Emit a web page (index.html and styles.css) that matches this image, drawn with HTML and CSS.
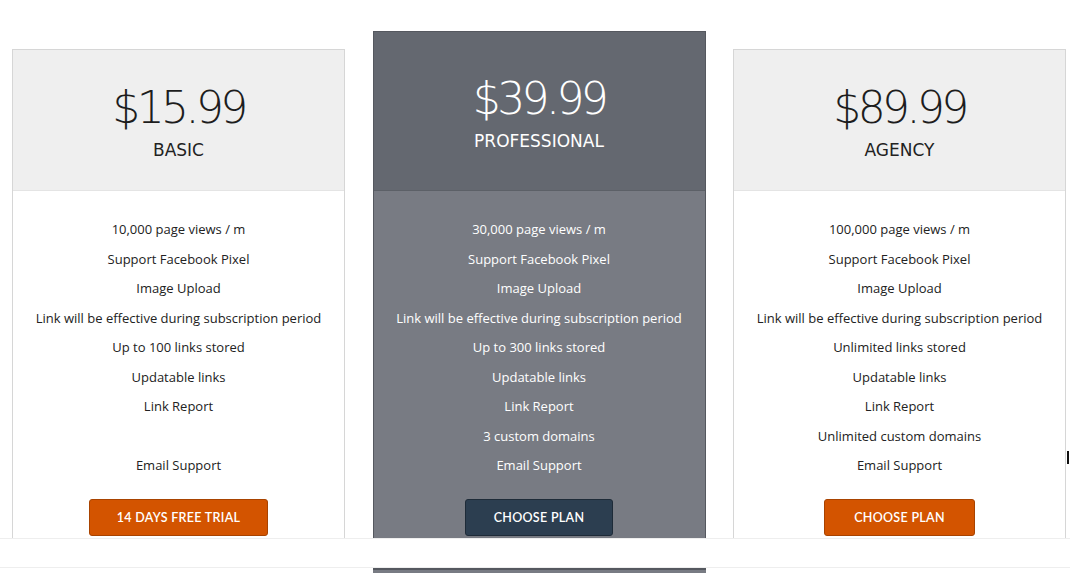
FILE: index.html
```html
<!DOCTYPE html>
<html>
<head>
<meta charset="utf-8">
<link rel="stylesheet" href="styles.css">
</head>
<body>
<div class="page">
  <div class="plans">
    <div class="card">
      <div class="head">
        <div class="price">$15.99</div>
        <div class="name">BASIC</div>
      </div>
      <ul class="features">
        <li>10,000 page views / m</li>
        <li>Support Facebook Pixel</li>
        <li>Image Upload</li>
        <li>Link will be effective during subscription period</li>
        <li>Up to 100 links stored</li>
        <li>Updatable links</li>
        <li>Link Report</li>
        <li>&nbsp;</li>
        <li>Email Support</li>
      </ul>
      <div class="action"><a class="btn">14 DAYS FREE TRIAL</a></div>
    </div>
    <div class="card featured">
      <div class="head">
        <div class="price">$39.99</div>
        <div class="name">PROFESSIONAL</div>
      </div>
      <ul class="features">
        <li>30,000 page views / m</li>
        <li>Support Facebook Pixel</li>
        <li>Image Upload</li>
        <li>Link will be effective during subscription period</li>
        <li>Up to 300 links stored</li>
        <li>Updatable links</li>
        <li>Link Report</li>
        <li>3 custom domains</li>
        <li>Email Support</li>
      </ul>
      <div class="action"><a class="btn dark">CHOOSE PLAN</a></div>
    </div>
    <div class="card">
      <div class="head">
        <div class="price">$89.99</div>
        <div class="name">AGENCY</div>
      </div>
      <ul class="features">
        <li>100,000 page views / m</li>
        <li>Support Facebook Pixel</li>
        <li>Image Upload</li>
        <li>Link will be effective during subscription period</li>
        <li>Unlimited links stored</li>
        <li>Updatable links</li>
        <li>Link Report</li>
        <li>Unlimited custom domains</li>
        <li>Email Support</li>
      </ul>
      <div class="action"><a class="btn wide">CHOOSE PLAN</a></div>
    </div>
    <span class="caret"></span>
  </div>
  <div class="band"></div>
  <div class="plans tail">
    <div class="tail-col"></div>
    <div class="tail-col featured-tail"></div>
    <div class="tail-col"></div>
  </div>
</div>
</body>
</html>
```

FILE: styles.css
```css
html, body {
  margin: 0;
  padding: 0;
  background: #fff;
}
.page {
  width: 1070px;
  height: 573px;
  overflow: hidden;
  font-family: "Open Sans", "Liberation Sans", sans-serif;
}
.plans {
  display: flex;
  gap: 27.5px;
  padding-left: 12px;
  height: 538px;
  overflow: hidden;
  align-items: flex-start;
  position: relative;
}
.card {
  width: 333px;
  box-sizing: border-box;
  border: 1px solid #d6d6d6;
  border-bottom: none;
  margin-top: 49px;
  background: #fff;
  text-align: center;
  color: #222;
}
.head {
  background: #efefef;
  height: 141px;
  box-sizing: border-box;
  padding-top: 30px;
  border-bottom: 1px solid #e4e4e4;
}
.price {
  font-family: "DejaVu Sans", "Liberation Sans", sans-serif;
  font-weight: 200;
  font-size: 44px;
  line-height: 56px;
  letter-spacing: -3.6px;
  color: #1d1d1d;
}
.name {
  font-family: "DejaVu Sans", "Liberation Sans", sans-serif;
  font-size: 17px;
  line-height: 22px;
  margin-top: 3px;
  color: #222;
}
.features {
  list-style: none;
  margin: 0;
  padding: 24px 0 0;
}
.features li {
  font-size: 13px;
  line-height: 29.5px;
}
.action {
  padding-top: 18px;
  padding-bottom: 40px;
}
.btn {
  display: inline-block;
  box-sizing: border-box;
  height: 37px;
  line-height: 35px;
  padding: 0 27px;
  background: #d35400;
  border: 1px solid #a84300;
  border-radius: 3px;
  color: #fff;
  font-family: "Lato", "Liberation Sans", sans-serif;
  font-weight: 600;
  font-size: 12.5px;
  letter-spacing: 0.3px;
}
.btn.dark {
  background: #2c3e50;
  border-color: #1e2b38;
  padding: 0 28px;
}
.btn.wide {
  padding: 0 29px;
}
.featured {
  margin-top: 31px;
  background: #787b83;
  border-color: #55585f;
  color: #fff;
}
.featured .head {
  background: #646870;
  height: 159px;
  padding-top: 39px;
  border-bottom: 1px solid #5c6067;
}
.featured .price,
.featured .name {
  color: #fff;
}
.caret {
  position: absolute;
  left: 1067px;
  top: 451px;
  width: 2px;
  height: 13px;
  background: #111;
}
.band {
  height: 28px;
  border-top: 1px solid #eeeeee;
  border-bottom: 1px solid #eeeeee;
  background: #fff;
}
.tail {
  height: 10px;
}
.tail-col {
  width: 333px;
  height: 10px;
}
.featured-tail {
  background: #787b83;
  border-top: 2px solid #55585f;
  box-sizing: border-box;
}
```
